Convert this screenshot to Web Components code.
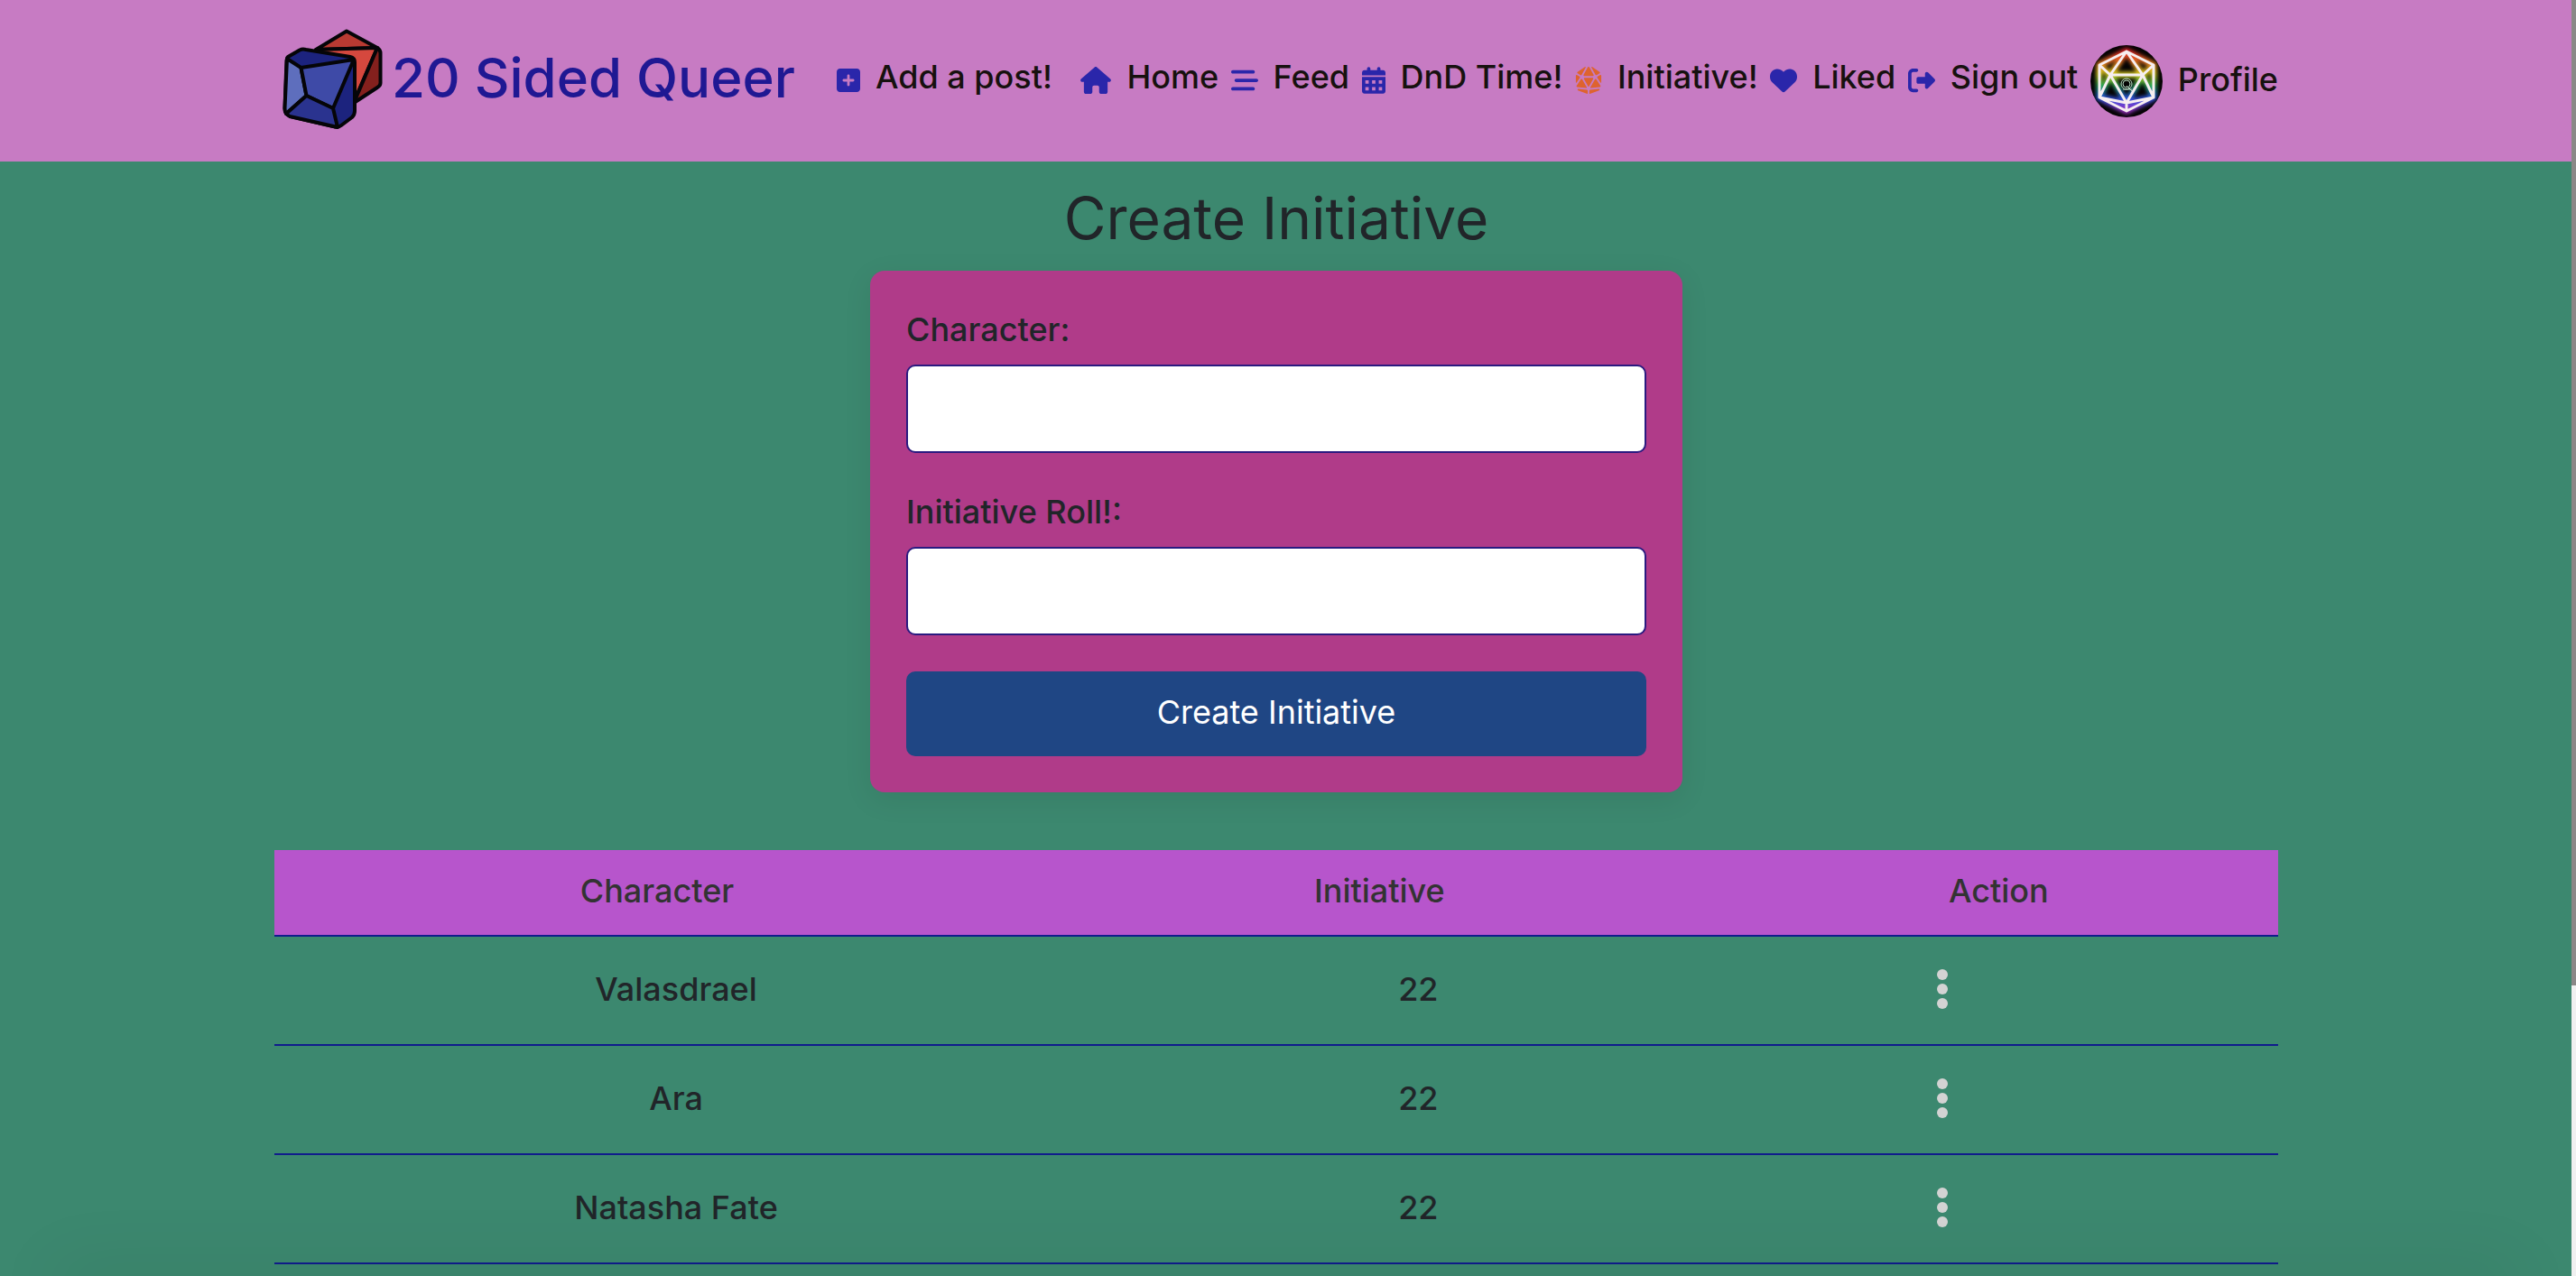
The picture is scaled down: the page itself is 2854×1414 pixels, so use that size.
<!DOCTYPE html>
<html lang="en">
<head>
<meta charset="utf-8">
<meta name="viewport" content="width=device-width, initial-scale=1">
<title>20 Sided Queer</title>
<style>
  html, body { margin: 0; height: 100%; }
  body {
    overflow: hidden;
    font-family: Inter, "Open Sans", sans-serif;
    font-size: 36px;
    line-height: 50px;
    color: #212529;
    background: #3c886f;
  }
</style>
</head>
<body>
<page-shell>
  <site-header slot="header"></site-header>
  <initiative-form></initiative-form>
  <initiative-table></initiative-table>
</page-shell>

<script>
const define = (name, html, setup) => {
  const template = document.createElement("template");
  template.innerHTML = html;
  customElements.define(name, class extends HTMLElement {
    constructor() {
      super();
      this.attachShadow({ mode: "open" }).append(template.content.cloneNode(true));
    }
    connectedCallback() { if (setup) setup(this, this.shadowRoot); }
  });
};

/* Page frame: header, centred content column and slim scroll rail */
define("page-shell", `
  <style>
    :host { display: flex; height: 100vh; overflow: hidden; position: relative; }
    .page { flex: 1; min-width: 0; overflow: hidden; }
    main {
      display: flex; flex-direction: column; gap: 64px;
      max-width: 2220px; margin: 0 auto; padding: 24px 0 0;
    }
    .inner { padding-right: 21px; }
    .rail { width: 5px; background: #f0f0f0; }
    .thumb { height: 77.2%; background: #8a8887; }
    .shade {
      position: absolute; left: 60px; right: 65px; bottom: -20px; height: 20px;
      box-shadow: 0 0 80px rgba(0, 0, 0, .16); pointer-events: none;
    }
  </style>
  <div class="page">
    <slot name="header"></slot>
    <div class="inner"><main><slot></slot></main></div>
  </div>
  <div class="rail"><div class="thumb"></div></div>
  <div class="shade"></div>
`);

define("dice-logo", `
  <style>:host { display: block; flex: none; } svg { display: block; }</style>
  <svg width="130" height="130" viewBox="305 24 130 130" stroke="#050508" stroke-width="4" stroke-linejoin="round" stroke-linecap="round" aria-hidden="true">
    <path d="M351 56 L385 35.5 L419 54 Z" fill="#b93a32"/>
    <path d="M351 56 L419 54 L393 114 Z" fill="#d5483e"/>
    <path d="M419 54 Q422.500 56 422.500 60 L422.500 93 Q422.500 96 419 98 L393 115 Z" fill="#84201d"/>
    <path d="M320 64 L333 56.500 Q336 55 340 56 L389 64 Q394 65 394 70 L394 124 Q394 128 391 131 L379 140 Q375 143 370 141 L323 130 Q316.500 128 316.500 121 L318.500 68 Q318.500 65 320 64 Z" fill="#1c237e"/>
    <path d="M319 66 L334.500 76 L340.500 107 L318 127 Q316.500 125 316.500 121 Z" fill="#5e6ebd" />
    <path d="M334.500 76 L393 67 L370 121 L340.500 107 Z" fill="#3e4aa7"/>
    <path d="M318 127 L340.500 107 L370 121 L375 142 L322 130 Z" fill="#2a338f"/>
  </svg>
`);

const ICONS = {
  plus: ["448", "M64 32C28.700 32 0 60.700 0 96V416c0 35.300 28.700 64 64 64H384c35.300 0 64-28.700 64-64V96c0-35.300-28.700-64-64-64H64zM200 344V280H136c-13.300 0-24-10.700-24-24s10.700-24 24-24h64V168c0-13.300 10.700-24 24-24s24 10.700 24 24v64h64c13.300 0 24 10.700 24 24s-10.700 24-24 24H248v64c0 13.300-10.700 24-24 24s-24-10.700-24-24z"],
  home: ["576", "M575.8 255.5c0 18-15 32.1-32 32.1h-32l.7 160.2c0 2.7-.2 5.4-.5 8.1V472c0 22.1-17.9 40-40 40H456c-1.1 0-2.2 0-3.3-.1c-1.4 .1-2.8 .1-4.2 .1H416 392c-22.1 0-40-17.9-40-40V448 384c0-17.7-14.3-32-32-32H256c-17.7 0-32 14.3-32 32v64 24c0 22.1-17.9 40-40 40H160 128.1c-1.5 0-3-.1-4.5-.2c-1.2 .1-2.4 .2-3.6 .2H104c-22.1 0-40-17.9-40-40V360c0-.9 0-1.9 .1-2.8V287.6H32c-18 0-32-14-32-32.1c0-9 3-17 10-24L266.4 8c7-7 15-8 22-8s15 2 21 7L564.8 231.5c8 7 12 15 11 24z"],
  feed: ["512", "M0 96C0 78.3 14.3 64 32 64H416c17.7 0 32 14.3 32 32s-14.3 32-32 32H32C14.3 128 0 113.7 0 96zM64 256c0-17.7 14.3-32 32-32H480c17.7 0 32 14.3 32 32s-14.3 32-32 32H96c-17.7 0-32-14.3-32-32zM448 416c0 17.7-14.3 32-32 32H32c-17.7 0-32-14.3-32-32s14.3-32 32-32H416c17.7 0 32 14.3 32 32z"],
  calendar: ["448", "M96 32C96 14.300 110.300 0 128 0s32 14.300 32 32V64H288V32c0-17.700 14.300-32 32-32s32 14.300 32 32V64h48c26.500 0 48 21.500 48 48v48H0V112C0 85.500 21.500 64 48 64H96V32zM0 192H448V464c0 26.500-21.500 48-48 48H48c-26.500 0-48-21.500-48-48V192zM64 256h64v64H64zM192 256h64v64h-64zM320 256h64v64h-64zM64 384h64v64H64zM192 384h64v64h-64zM320 384h64v64h-64z"],
  d20: ["512", "M48.7 125.8l53.2 31.9c7.8 4.7 17.8 2 22.2-5.9L201.6 12.1c3-5.4-.9-12.1-7.1-12.1c-1.6 0-3.2 .5-4.6 1.4L47.9 98.8c-9.6 6.6-9.2 20.9 .8 26.9zM16 171.7V295.3c0 8 10.4 11 14.7 4.4l60-92c5-7.6 2.6-17.8-5.2-22.5L40.2 158C29.6 151.6 16 159.3 16 171.7zM310.4 12.1l77.6 139.6c4.4 7.9 14.5 10.6 22.2 5.9l53.2-31.9c10-6 10.4-20.3 .8-26.9L322.1 1.4c-1.4-.9-3-1.4-4.6-1.4c-6.2 0-10.1 6.7-7.1 12.1zM496 171.7c0-12.4-13.6-20.1-24.2-13.7l-45.3 27.2c-7.8 4.7-10.1 14.9-5.2 22.5l60 92c4.3 6.7 14.7 3.6 14.7-4.4V171.7zm-49.3 246L286.1 436.6c-8.1 .9-14.1 7.8-14.1 15.9v52.8c0 3.7 3 6.8 6.8 6.8c.8 0 1.6-.1 2.4-.4l172.7-64c6.1-2.2 10.1-8 10.1-14.5c0-9.3-8.1-16.5-17.3-15.4zM233.2 512c3.7 0 6.8-3 6.8-6.8V452.6c0-8.1-6.1-14.9-14.1-15.9l-160.6-19c-9.2-1.1-17.3 6.1-17.3 15.4c0 6.5 4 12.3 10.1 14.5l172.7 64c.8 .3 1.6 .4 2.4 .4zM41.7 382.9l170.9 20.2c7.8 .9 13.4-7.5 9.5-14.3l-85.7-150c-5.9-10.4-20.7-10.8-27.3-.8L30.2 358.2c-6.5 9.9-.3 23.3 11.5 24.7zm439.6-24.8L402.9 238.1c-6.5-10-21.4-9.6-27.3 .8L290.2 388.5c-3.9 6.8 1.6 15.2 9.5 14.3l170.1-20c11.8-1.4 18-14.7 11.5-24.6zm-216.9 11l78.4-137.2c6.1-10.7-1.6-23.9-13.9-23.9H183.1c-12.3 0-20 13.3-13.9 23.9l78.4 137.2c3.7 6.4 13 6.4 16.7 0zM174.4 176H337.6c12.2 0 19.9-13.1 14-23.8l-80-144c-2.8-5.1-8.2-8.2-14-8.2h-3.2c-5.8 0-11.2 3.2-14 8.2l-80 144c-5.9 10.7 1.8 23.8 14 23.8z"],
  heart: ["512", "M47.6 300.4L228.3 469.1c7.5 7 17.4 10.9 27.7 10.9s20.2-3.9 27.7-10.9L464.4 300.4c30.4-28.3 47.6-68 47.6-109.5v-5.8c0-69.9-50.5-129.5-119.4-141C347 36.5 300.6 51.4 268 84L256 96 244 84c-32.6-32.6-79-47.5-124.6-39.9C50.5 55.6 0 115.2 0 185.1v5.8c0 41.5 17.2 81.2 47.6 109.5z"],
  signout: ["512", "M377.9 105.9L500.7 228.7c7.2 7.2 11.3 17.1 11.3 27.3s-4.1 20.1-11.3 27.3L377.9 406.1c-6.4 6.4-15 9.900-24 9.900c-18.7 0-33.9-15.2-33.9-33.9l0-62.1-128 0c-17.7 0-32-14.3-32-32l0-64c0-17.7 14.3-32 32-32l128 0 0-62.1c0-18.7 15.2-33.9 33.9-33.9c9 0 17.6 3.6 24 9.9zM160 96L96 96c-17.7 0-32 14.3-32 32l0 256c0 17.7 14.3 32 32 32l64 0c17.7 0 32 14.3 32 32s-14.3 32-32 32l-64 0c-53 0-96-43-96-96L0 128C0 75 43 32 96 32l64 0c17.7 0 32 14.3 32 32s-14.3 32-32 32z"]
};

define("nav-item", `
  <style>
    :host { display: block; flex: none; }
    :host([icon]) { padding-bottom: 6px; }
    a { display: flex; align-items: center; gap: 17px; color: #17110f; text-decoration: none; font-weight: 500; white-space: nowrap; }
    span { padding-bottom: 4px; }
    svg { display: block; height: 30px; margin-top: 4px; fill: var(--icon, #2a26aa); }
  </style>
  <a href="#"><slot name="icon"><svg aria-hidden="true"><path fill-rule="evenodd"/></svg></slot><span><slot></slot></span></a>
`, (host, root) => {
  const icon = ICONS[host.getAttribute("icon")];
  if (!icon) return;
  const svg = root.querySelector("svg");
  svg.setAttribute("viewBox", `0 0 ${icon[0]} 512`);
  svg.setAttribute("width", Math.round(icon[0] * 30 / 512));
  svg.firstElementChild.setAttribute("d", icon[1]);
});

/* Neon d20 portrait */
define("user-avatar", `
  <style>:host { display: block; flex: none; } svg { display: block; border-radius: 50%; }</style>
  <svg width="80" height="80" viewBox="0 0 80 80" role="img" aria-label="Avatar">
    <defs>
      <linearGradient id="rainbow" gradientUnits="userSpaceOnUse" x1="0" y1="6" x2="0" y2="74">
        <stop offset="0" stop-color="#e8202a"/><stop offset=".2" stop-color="#e07820"/>
        <stop offset=".38" stop-color="#d8cc20"/><stop offset=".56" stop-color="#28a848"/>
        <stop offset=".76" stop-color="#2458e0"/><stop offset="1" stop-color="#a02cc0"/>
      </linearGradient>
      <filter id="glow" filterUnits="userSpaceOnUse" x="0" y="0" width="80" height="80"><feGaussianBlur stdDeviation="2"/></filter>
      <path id="wire" d="M40 7 L70 22 V58 L40 73 L10 58 V22 Z M40 7 L22 33 H58 Z M22 33 L10 22 M58 33 L70 22 M22 33 L10 58 L40 64 L70 58 L58 33 M22 33 L40 64 L58 33 M40 64 V73"/>
    </defs>
    <rect width="80" height="80" fill="#050304"/>
    <g fill="none" stroke-linejoin="round">
      <use href="#wire" stroke="url(#rainbow)" stroke-width="7" filter="url(#glow)"/>
      <use href="#wire" stroke="#f6eef0" stroke-width="3"/>
      <g stroke="#b8dcc4" stroke-width="1"><circle cx="40" cy="43" r="6"/><circle cx="40" cy="43" r="4"/><path d="M36 49 H46 M40 45 L46 51"/></g>
    </g>
  </svg>
`);

define("site-header", `
  <style>
    :host { display: block; background: #c77bc3; padding-right: 21px; }
    header { display: flex; align-items: center; max-width: 2220px; height: 179px; margin: 0 auto; }
    .brand { display: flex; align-items: center; padding-bottom: 4px; color: #1f1893; text-decoration: none; font-size: 60px; line-height: 72px; font-weight: 500; white-space: nowrap; }
    .brand span { padding-bottom: 4px; }
    nav { display: flex; flex: 1; align-items: center; justify-content: space-between; margin-left: 46px; }
    .add { margin-right: 18px; }
  </style>
  <header>
    <a class="brand" href="#"><dice-logo></dice-logo><span>20 Sided Queer</span></a>
    <nav>
      <nav-item icon="plus" class="add">Add a post!</nav-item>
      <nav-item icon="home">Home</nav-item>
      <nav-item icon="feed">Feed</nav-item>
      <nav-item icon="calendar">DnD Time!</nav-item>
      <nav-item icon="d20" style="--icon: #de632f">Initiative!</nav-item>
      <nav-item icon="heart">Liked</nav-item>
      <nav-item icon="signout">Sign out</nav-item>
      <nav-item><user-avatar slot="icon"></user-avatar>Profile</nav-item>
    </nav>
  </header>
`);

define("form-field", `
  <style>
    :host { display: flex; flex-direction: column; gap: 14px; }
    label { font-weight: 500; }
    input { box-sizing: border-box; width: 100%; height: 98px; padding: 12px 24px; border: 2px solid #2a1a80; border-radius: 10px; background: #fff; font: inherit; color: inherit; }
  </style>
  <label for="field"></label><input id="field" type="text">
`, (host, root) => {
  root.querySelector("label").textContent = host.getAttribute("label");
  root.querySelector("input").type = host.getAttribute("type") || "text";
});

define("initiative-form", `
  <style>
    :host { display: flex; flex-direction: column; align-items: center; gap: 20px; }
    h2 { margin: 0; font-size: 64px; line-height: 77px; font-weight: 400; }
    form {
      box-sizing: border-box; display: flex; flex-direction: column; gap: 40px;
      width: 100%; max-width: 900px; padding: 40px; border-radius: 16px;
      background: #b03b89; box-shadow: 0 8px 32px rgba(0, 0, 0, .08);
    }
    button { height: 94px; padding: 0 0 4px; border: 0; border-radius: 10px; background: #1f4684; color: #fff; font: inherit; }
  </style>
  <h2>Create Initiative</h2>
  <form>
    <form-field label="Character:"></form-field>
    <form-field label="Initiative Roll!:" type="number"></form-field>
    <button type="button">Create Initiative</button>
  </form>
`);

define("initiative-table", `
  <style>
    :host { display: block; }
    table { width: 100%; table-layout: fixed; border-collapse: separate; border-spacing: 0; text-align: center; font-weight: 500; }
    th, td { box-sizing: border-box; padding: 0 0 4px; border-bottom: 2px solid #101c8c; }
    th { height: 96px; background: #b755cc; color: #333; font-weight: 500; }
    td { height: 121px; }
    .name { width: 38.2%; }
    .roll { width: 33.9%; }
    td.name { padding-left: 42px; }
    td.roll { padding-left: 86px; }
    td.act { padding-right: 124px; }
    button { display: block; margin: 0 auto; padding: 0 8px; border: 0; background: none; }
    svg { display: block; fill: #d3d3d3; }
  </style>
  <table>
    <thead><tr><th class="name">Character</th><th class="roll">Initiative</th><th class="act">Action</th></tr></thead>
    <tbody></tbody>
  </table>
`, (host, root) => {
  const rows = [["Valasdrael", 22], ["Ara", 22], ["Natasha Fate", 22]];
  root.querySelector("tbody").innerHTML = rows.map(([name, roll]) => `
    <tr><td class="name">${name}</td><td class="roll">${roll}</td>
    <td class="act"><button type="button" aria-label="Actions"><svg width="12" height="44" viewBox="0 0 12 44"><circle cx="6" cy="6" r="6"/><circle cx="6" cy="22" r="6"/><circle cx="6" cy="38" r="6"/></svg></button></td></tr>`).join("");
});
</script>
</body>
</html>
